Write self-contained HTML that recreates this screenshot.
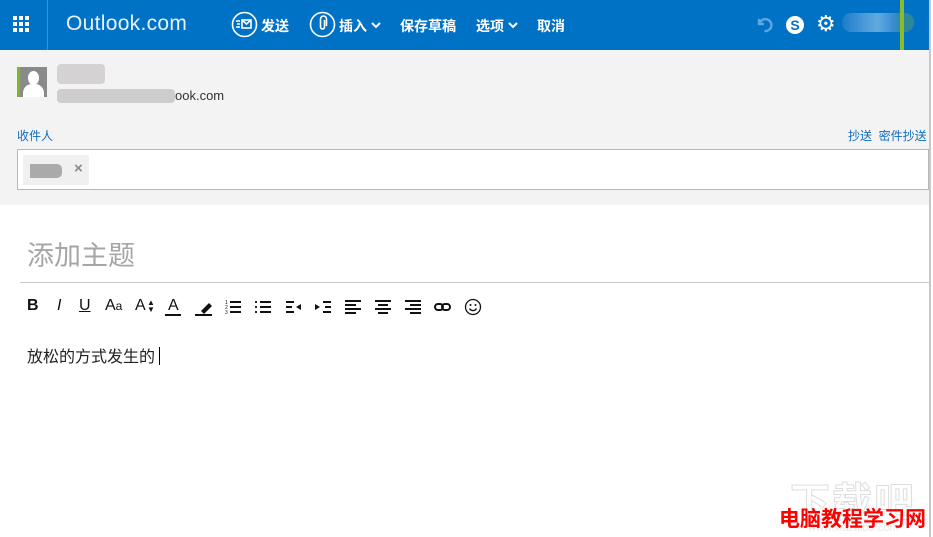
<!DOCTYPE html>
<html><head><meta charset="utf-8"><style>
*{margin:0;padding:0;box-sizing:border-box}
body{width:933px;height:537px;overflow:hidden;background:#fff;font-family:"Liberation Sans","Noto Sans CJK SC",sans-serif;position:relative}
.top{position:absolute;left:0;top:0;width:930px;height:50px;background:#0072c6;color:#fff}
.t{position:absolute;font-size:14px;top:16px;font-weight:bold}
.gray{position:absolute;left:0;top:50px;width:930px;height:155px;background:#f3f3f3}
.sb{position:absolute;left:929px;top:0;width:4px;height:537px;background:#fff;border-left:2px solid #c8c8c8}
.blue{color:#0f6cbd;font-size:12px;position:absolute}
</style></head><body>
<div class="top">
 <svg style="position:absolute;left:13px;top:16px" width="18" height="18" fill="#fff">
  <rect x="0" y="0" width="4" height="4"/><rect x="6" y="0" width="4" height="4"/><rect x="12" y="0" width="4" height="4"/>
  <rect x="0" y="6" width="4" height="4"/><rect x="6" y="6" width="4" height="4"/><rect x="12" y="6" width="4" height="4"/>
  <rect x="0" y="12" width="4" height="4"/><rect x="6" y="12" width="4" height="4"/><rect x="12" y="12" width="4" height="4"/></svg>
 <div style="position:absolute;left:47px;top:0;width:1px;height:50px;background:#3b8fd2"></div>
 <div style="position:absolute;left:66px;top:12px;font-size:21px;font-weight:normal;letter-spacing:0.3px;color:#e8f1fa">Outlook.com</div>
 <svg style="position:absolute;left:231px;top:11px" width="27" height="27" fill="none" stroke="#fff" stroke-width="1.6"><circle cx="13.5" cy="13.5" r="12"/><rect x="11" y="9" width="9" height="8"/><path d="M11 9l4.5 4 4.5-4M5 10h4M6 13h3M5 16h4"/></svg>
 <div class="t" style="left:261px">发送</div>
 <svg style="position:absolute;left:309px;top:11px" width="27" height="27" fill="none" stroke="#fff" stroke-width="1.6"><circle cx="13.5" cy="13.5" r="12"/><path d="M15.5 9v7a2 2 0 0 1-4 0v-8a3 3 0 0 1 6 0v7"/></svg>
 <div class="t" style="left:339px">插入</div>
 <svg style="position:absolute;left:371px;top:21px" width="10" height="8" fill="none" stroke="#fff" stroke-width="2"><path d="M1 2l4 4 4-4"/></svg>
 <div class="t" style="left:400px">保存草稿</div>
 <div class="t" style="left:476px">选项</div>
 <svg style="position:absolute;left:508px;top:21px" width="10" height="8" fill="none" stroke="#fff" stroke-width="2"><path d="M1 2l4 4 4-4"/></svg>
 <div class="t" style="left:537px">取消</div>
 <svg style="position:absolute;left:756px;top:15px" width="18" height="18" fill="none" stroke="#5fa6dd" stroke-width="2.4"><path d="M3 4v5h5M3.5 9a6 6 0 1 1 5 7"/></svg>
 <div style="position:absolute;left:786px;top:16px;width:18px;height:18px;border-radius:50%;background:#fff;color:#0072c6;font-size:14px;font-weight:bold;text-align:center;line-height:18px">S</div>
 <div style="position:absolute;left:816px;top:11px;font-size:22px">⚙</div>
 <div style="position:absolute;left:842px;top:13px;width:72px;height:19px;border-radius:9px;background:linear-gradient(90deg,#1a7ccc,#4a98d8 30%,#60aadf 50%,#3b8dd6 70%,#2e8799 85%)"></div>
 <div style="position:absolute;left:900px;top:0;width:4px;height:50px;background:#8cbc2a"></div>
</div>
<div class="gray">
 <div style="position:absolute;left:17px;top:17px;width:3px;height:30px;background:#7cbb1f"></div>
 <div style="position:absolute;left:20px;top:17px;width:27px;height:30px;background:#8a8a8a;overflow:hidden">
  <div style="position:absolute;left:8px;top:4px;width:11px;height:14px;border-radius:50%;background:#fff"></div>
  <div style="position:absolute;left:3px;top:17px;width:21px;height:16px;border-radius:9px 9px 0 0;background:#fff"></div></div>
 <div style="position:absolute;left:57px;top:14px;width:48px;height:20px;background:#d4d2d2;border-radius:4px"></div>
 <div style="position:absolute;left:57px;top:39px;width:118px;height:14px;background:#cecccc;border-radius:4px"></div>
 <div style="position:absolute;left:175px;top:38px;font-size:13px;color:#333">ook.com</div>
 <div class="blue" style="left:17px;top:77px">收件人</div>
 <div class="blue" style="left:848px;top:77px">抄送 &nbsp;密件抄送</div>
 <div style="position:absolute;left:17px;top:99px;width:912px;height:41px;background:#fff;border:1px solid #b8b8b8">
  <div style="position:absolute;left:5px;top:5px;width:66px;height:30px;background:#f0f0f0"></div>
  <div style="position:absolute;left:12px;top:14px;width:32px;height:14px;background:#aaa;border-radius:0 5px 5px 0"></div>
  <div style="position:absolute;left:56px;top:10px;font-size:15px;font-weight:bold;color:#888">×</div>
 </div>
</div>
<div style="position:absolute;left:27px;top:234px;font-size:27px;color:#a6a6a6">添加主题</div>
<div style="position:absolute;left:20px;top:282px;width:910px;height:1px;background:#c8c8c8"></div>
<div style="position:absolute;left:27px;top:296px;font-size:16px;color:#111;white-space:nowrap;line-height:20px">
 <b style="position:absolute;left:0">B</b>
 <i style="position:absolute;left:30px">I</i>
 <u style="position:absolute;left:52px">U</u>
 <span style="position:absolute;left:78px">A<small style="font-size:12px">a</small></span>
 <span style="position:absolute;left:108px">A</span>
 <span style="position:absolute;left:120px;top:-3px;font-size:8px">▲</span>
 <span style="position:absolute;left:120px;top:4px;font-size:8px">▼</span>
 <span style="position:absolute;left:141px">A</span>
</div>
<svg style="position:absolute;left:20px;top:296px" width="470" height="22" fill="#111" stroke="#111">
 <rect x="145" y="18" width="16" height="2" stroke="none"/>
 <path d="M181 15l8-8 3 3-8 8z" stroke="none"/><rect x="175" y="18" width="17" height="2" stroke="none"/>
 <g stroke-width="2"><path d="M210 6h11M210 11h11M210 16h11"/></g><text x="205" y="8" font-size="5" stroke="none">1</text><text x="205" y="13" font-size="5" stroke="none">2</text><text x="205" y="18" font-size="5" stroke="none">3</text>
 <g stroke-width="2"><path d="M240 6h11M240 11h11M240 16h11"/></g><circle cx="236" cy="6" r="1.1" stroke="none"/><circle cx="236" cy="11" r="1.1" stroke="none"/><circle cx="236" cy="16" r="1.1" stroke="none"/>
 <g stroke-width="2"><path d="M266 6h8M266 11h6M266 16h8"/></g><path d="M281 8v6l-5-3z" stroke="none"/>
 <g stroke-width="2"><path d="M303 6h8M305 11h6M303 16h8"/></g><path d="M295 8v6l5-3z" stroke="none"/>
 <g stroke-width="2"><path d="M325 5h16M325 9h11M325 13h16M325 17h11"/></g>
 <g stroke-width="2"><path d="M355 5h16M358 9h10M355 13h16M358 17h10"/></g>
 <g stroke-width="2"><path d="M385 5h16M390 9h11M385 13h16M390 17h11"/></g>
 <g fill="none" stroke-width="2"><rect x="415" y="8" width="8" height="6" rx="3"/><rect x="422" y="8" width="8" height="6" rx="3"/></g>
 <g fill="none" stroke-width="1.3"><circle cx="453" cy="11" r="7.5"/><path d="M449.5 12.5a4 4 0 0 0 7 0"/></g><circle cx="450.5" cy="9" r="1" stroke="none"/><circle cx="455.5" cy="9" r="1" stroke="none"/>
</svg>
<div style="position:absolute;left:27px;top:343px;font-size:16px;color:#222">放松的方式发生的 <span style="display:inline-block;width:1px;height:18px;background:#000;vertical-align:-3px"></span></div>
<div style="position:absolute;left:790px;top:470px;font-size:40px;font-weight:bold;color:#fff;-webkit-text-stroke:1px #ddd;letter-spacing:2px">下载吧</div>
<div style="position:absolute;left:808px;top:522px;font-size:11px;color:#e8e8e8">www.xiazaiba.com</div>
<div style="position:absolute;left:779px;top:503px;font-size:21px;font-weight:bold;color:#f00">电脑教程学习网</div>
<div class="sb"></div>
</body></html>
